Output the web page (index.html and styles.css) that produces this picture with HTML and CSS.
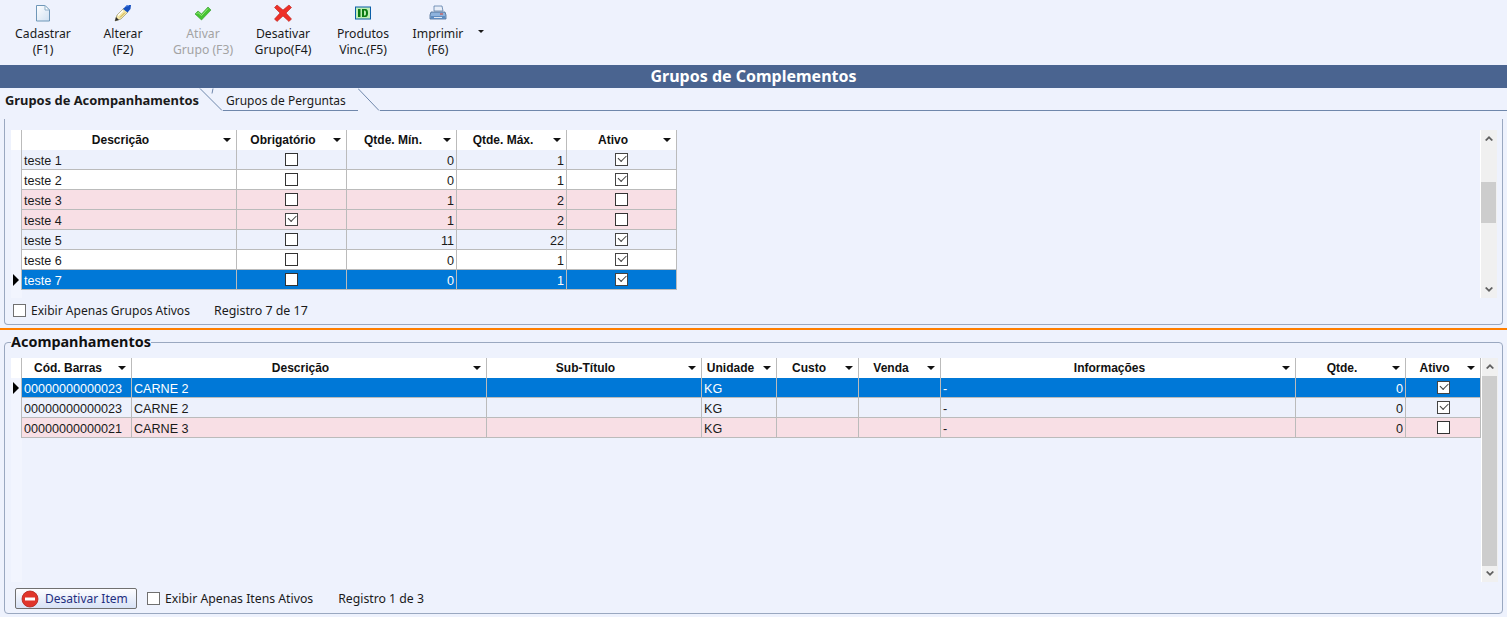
FILE: index.html
```html
<!DOCTYPE html>
<html>
  <head>
    <title>Grupos de Complementos</title>
    <meta charset="utf-8" />
    <link rel="stylesheet" href="styles.css">
  </head>
  <body>
    <div class="toolbar">
      <div class="tool">
        <svg class="tool_icon" width="18" height="18" viewBox="0 0 18 18">
          <defs>
            <linearGradient id="page_fill" x1="0" y1="0" x2="1" y2="1">
              <stop offset="0" stop-color="#ffffff"/>
              <stop offset="1" stop-color="#cfe0f2"/>
            </linearGradient>
          </defs>
          <path d="M2.500 1.500h8.500l4.500 4.500v11h-13z" fill="url(#page_fill)" stroke="#6f97b8"/>
          <path d="M11 1.500v4.500h4.500z" fill="#fff" stroke="#8fb0ca"/>
        </svg>
        <span>Cadastrar<br>(F1)</span>
      </div>
      <div class="tool">
        <svg class="tool_icon" width="18" height="18" viewBox="0 0 18 18">
          <path d="M1 17l2-6 7-7 4 4-7 7z" fill="#f4e7a8" stroke="#8a8460" stroke-width=".6"/>
          <path d="M1 17l1-4 3 3z" fill="#2c2c2c"/>
          <path d="M9 5l4-4 4 0-.500 4-3 3.500z" fill="#1650c0"/>
          <path d="M12 2l3-.500" stroke="#6f9df0" stroke-width="1"/>
          <path d="M4 11.500l5-5" stroke="#fff" stroke-width="1.200"/>
          <path d="M6 13.500l5-5" stroke="#c7a83c" stroke-width="1"/>
        </svg>
        <span>Alterar<br>(F2)</span>
      </div>
      <div class="tool tool_disabled">
        <svg class="tool_icon" width="18" height="18" viewBox="0 0 18 18">
          <path d="M1 10l3-3 3.500 3L14 3l3 3-9.500 10z" fill="#46c432" stroke="#2f9a28" stroke-width=".6"/>
          <path d="M2.500 10l1.500-1.500 3.500 3L14 4.500" fill="none" stroke="#9bec82" stroke-width="1"/>
        </svg>
        <span>Ativar<br>Grupo (F3)</span>
      </div>
      <div class="tool">
        <svg class="tool_icon" width="18" height="18" viewBox="0 0 18 18">
          <path d="M3 1l6 5L15 1l2.500 2.500L12 9l5.500 6-2.500 2.500L9 12l-6 5.500L.500 15 6 9 .500 3.500z" fill="#ee3028" stroke="#b8241c" stroke-width=".6"/>
        </svg>
        <span>Desativar<br>Grupo(F4)</span>
      </div>
      <div class="tool">
        <svg class="tool_icon" width="18" height="18" viewBox="0 0 18 18">
          <rect x="1.500" y="3" width="15" height="12" fill="#bfeeb5" stroke="#0b5fa8"/>
          <path d="M4 5h2.500v8H4zM8 5h3.500q2.500 0 2.500 4t-2.500 4H8zM10 6.500v5h1q1 0 1-2.500t-1-2.500z" fill="#0a7a12"/>
        </svg>
        <span>Produtos<br>Vinc.(F5)</span>
      </div>
      <div class="tool tool_last">
        <svg class="tool_icon" width="18" height="18" viewBox="0 0 18 18">
          <path d="M5 2h8l1 5H5z" fill="#e8eef8" stroke="#5b7ea8" stroke-width=".8"/>
          <path d="M2 8h14l1 3v4H1v-4z" fill="#8eb3dd" stroke="#44688f" stroke-width=".8"/>
          <path d="M2 12h14v3H2z" fill="#5f8cc0"/>
          <path d="M11 10h3" stroke="#e0402c"/>
          <path d="M5 13h8v1H5z" fill="#dfe7f2"/>
        </svg>
        <span>Imprimir<br>(F6)</span>
      </div>
      <div class="tool_arrow"></div>
    </div>

    <div class="title_bar">Grupos de Complementos</div>

    <div class="tabs">
      <div class="tab tab_active">Grupos de Acompanhamentos</div>
      <svg class="tab_slant" width="24" height="23" viewBox="0 0 24 23">
        <path d="M1 0.500L23 22.500" stroke="#6f87ab" fill="none"/>
        <path d="M14 0.500l-1 5" stroke="#6f87ab" fill="none"/>
      </svg>
      <div class="tab tab_other">Grupos de Perguntas</div>
      <svg class="tab_slant tab_slant_end" width="22" height="23" viewBox="0 0 22 23">
        <path d="M0 0.500L21 22.500" stroke="#6f87ab" fill="none"/>
      </svg>
      <div class="tab_fill"></div>
    </div>

    <div class="panel panel_groups">
      <div class="grid_row_wrap">
        <div class="grid_area grid_area_groups">
          <table class="grid grid_groups">
            <colgroup>
              <col class="col_ind"><col style="width:215px"><col style="width:110px"><col style="width:110px"><col style="width:110px"><col style="width:110px">
            </colgroup>
            <thead>
              <tr>
                <th class="ind"></th>
                <th><span>Descrição</span></th>
                <th><span>Obrigatório</span></th>
                <th><span>Qtde. Mín.</span></th>
                <th><span>Qtde. Máx.</span></th>
                <th><span>Ativo</span></th>
              </tr>
            </thead>
            <tbody>
              <tr class="row_blue"><td class="ind"></td><td>teste 1</td><td class="chk"><i class="box"></i></td><td class="num">0</td><td class="num">1</td><td class="chk"><i class="box on"></i></td></tr>
              <tr class="row_white"><td class="ind"></td><td>teste 2</td><td class="chk"><i class="box"></i></td><td class="num">0</td><td class="num">1</td><td class="chk"><i class="box on"></i></td></tr>
              <tr class="row_pink"><td class="ind"></td><td>teste 3</td><td class="chk"><i class="box"></i></td><td class="num">1</td><td class="num">2</td><td class="chk"><i class="box"></i></td></tr>
              <tr class="row_pink"><td class="ind"></td><td>teste 4</td><td class="chk"><i class="box on"></i></td><td class="num">1</td><td class="num">2</td><td class="chk"><i class="box"></i></td></tr>
              <tr class="row_blue"><td class="ind"></td><td>teste 5</td><td class="chk"><i class="box"></i></td><td class="num">11</td><td class="num">22</td><td class="chk"><i class="box on"></i></td></tr>
              <tr class="row_white"><td class="ind"></td><td>teste 6</td><td class="chk"><i class="box"></i></td><td class="num">0</td><td class="num">1</td><td class="chk"><i class="box on"></i></td></tr>
              <tr class="row_sel"><td class="ind"><b class="pointer"></b></td><td>teste 7</td><td class="chk"><i class="box"></i></td><td class="num">0</td><td class="num">1</td><td class="chk"><i class="box on"></i></td></tr>
            </tbody>
          </table>
        </div>
        <div class="scroll scroll_groups">
          <svg class="scroll_btn" width="16" height="16" viewBox="0 0 16 16"><path d="M4 9l4-4 4 4-1.500 1L8 7.500 5.500 10z" fill="#606060"/></svg>
          <div class="scroll_track"><div class="thumb thumb_groups"></div></div>
          <svg class="scroll_btn" width="16" height="16" viewBox="0 0 16 16"><path d="M4 7l4 4 4-4-1.500-1L8 8.500 5.500 6z" fill="#606060"/></svg>
        </div>
      </div>
      <div class="panel_foot foot_groups">
        <i class="box box_plain"></i>
        <span>Exibir Apenas Grupos Ativos</span>
        <span class="reg_groups">Registro 7 de 17</span>
      </div>
    </div>

    <div class="splitter"></div>

    <fieldset class="panel panel_items">
      <legend>Acompanhamentos</legend>
      <div class="grid_row_wrap">
        <div class="grid_area grid_area_items">
          <table class="grid grid_items">
            <colgroup>
              <col class="col_ind"><col style="width:110px"><col style="width:355px"><col style="width:215px"><col style="width:75px"><col style="width:82px"><col style="width:82px"><col style="width:355px"><col style="width:110px"><col style="width:75px">
            </colgroup>
            <thead>
              <tr>
                <th class="ind"></th>
                <th><span>Cód. Barras</span></th>
                <th><span>Descrição</span></th>
                <th><span>Sub-Título</span></th>
                <th><span>Unidade</span></th>
                <th><span>Custo</span></th>
                <th><span>Venda</span></th>
                <th><span>Informações</span></th>
                <th><span>Qtde.</span></th>
                <th><span>Ativo</span></th>
              </tr>
            </thead>
            <tbody>
              <tr class="row_sel"><td class="ind"><b class="pointer"></b></td><td>00000000000023</td><td>CARNE 2</td><td></td><td>KG</td><td></td><td></td><td>-</td><td class="num">0</td><td class="chk"><i class="box on"></i></td></tr>
              <tr class="row_blue"><td class="ind"></td><td>00000000000023</td><td>CARNE 2</td><td></td><td>KG</td><td></td><td></td><td>-</td><td class="num">0</td><td class="chk"><i class="box on"></i></td></tr>
              <tr class="row_pink"><td class="ind"></td><td>00000000000021</td><td>CARNE 3</td><td></td><td>KG</td><td></td><td></td><td>-</td><td class="num">0</td><td class="chk"><i class="box"></i></td></tr>
            </tbody>
          </table>
        </div>
        <div class="scroll scroll_items">
          <svg class="scroll_btn" width="16" height="16" viewBox="0 0 16 16"><path d="M4 9l4-4 4 4-1.500 1L8 7.500 5.500 10z" fill="#606060"/></svg>
          <div class="scroll_track"><div class="thumb thumb_items"></div></div>
          <svg class="scroll_btn" width="16" height="16" viewBox="0 0 16 16"><path d="M4 7l4 4 4-4-1.500-1L8 8.500 5.500 6z" fill="#606060"/></svg>
        </div>
      </div>
      <div class="panel_foot foot_items">
        <button class="btn_off">
          <svg width="18" height="18" viewBox="0 0 18 18">
            <circle cx="9" cy="9" r="8" fill="#e0352b" stroke="#b3251c" stroke-width=".8"/>
            <path d="M4 7.500h10v3H4z" fill="#fff"/>
          </svg>
          Desativar Item
        </button>
        <i class="box box_plain"></i>
        <span>Exibir Apenas Itens Ativos</span>
        <span class="reg_items">Registro 1 de 3</span>
      </div>
    </fieldset>
  </body>
</html>
```

FILE: styles.css
```css
html,
body {
  margin: 0;
  padding: 0;
  height: 617px;
  overflow: hidden;
}
body {
  background-color: #eef2fd;
  font-family: "Noto Sans", sans-serif;
  font-size: 12px;
  color: #1a1a1a;
}

/* toolbar */
.toolbar {
  height: 65px;
  display: flex;
  padding-left: 3px;
  box-sizing: border-box;
}
.tool {
  width: 80px;
  padding-top: 4px;
  display: flex;
  flex-direction: column;
  align-items: center;
  text-align: center;
  font-size: 12.2px;
  line-height: 16px;
}
.tool_last {
  width: 70px;
}
.tool_icon {
  display: block;
  margin-bottom: 4px;
}
.tool_disabled {
  color: #a3a3a3;
}
.tool_arrow {
  width: 0;
  height: 0;
  margin: 30px 0 0 5px;
  border: 3px solid transparent;
  border-top: 3px solid #1a1a1a;
  border-bottom: 0;
}

.title_bar {
  height: 23px;
  background-color: #4a6490;
  color: #fff;
  font-size: 16px;
  font-weight: bold;
  line-height: 23px;
  text-align: center;
}

/* tabs */
.tabs {
  height: 23px;
  display: flex;
}
.tab {
  line-height: 25px;
  white-space: nowrap;
}
.tab_active {
  width: 199px;
  padding-left: 5px;
  box-sizing: border-box;
  font-size: 12.9px;
  font-weight: bold;
}
.tab_other {
  width: 135px;
  padding-left: 3px;
  box-sizing: border-box;
  border-bottom: 1px solid #6f87ab;
  height: 23px;
}
.tab_slant {
  flex: none;
  display: block;
}
.tab_fill {
  flex: 1;
  border-bottom: 1px solid #6f87ab;
}

/* panels */
.panel {
  margin: 0 4px;
  border: 1px solid #9aa8c0;
  border-radius: 4px;
  box-sizing: border-box;
}
.panel_groups {
  height: 206px;
  margin-top: 8px;
  border-top: 0;
  border-top-left-radius: 0;
  border-top-right-radius: 0;
  padding: 11px 5px 0 6px;
}
.splitter {
  height: 2px;
  margin-top: 3px;
  background-color: #ff7f00;
}
.panel_items {
  height: 280px;
  margin-top: 4px;
  padding: 0 5px 0 6px;
  min-width: 0;
}
.panel_items legend {
  padding: 0;
  margin-left: 0;
  font-size: 14.4px;
  font-weight: bold;
  line-height: 16px;
  color: #111;
}

.grid_row_wrap {
  display: flex;
}
.grid_area {
  flex: 1;
  background: linear-gradient(#f2f5fe, #f2f5fe) no-repeat left top / 11px 100%;
}
.grid_area_groups {
  height: 168px;
}
.grid_area_items {
  height: 224px;
  margin-top: 8px;
}

/* grids */
.grid {
  border-collapse: separate;
  border-spacing: 0;
  table-layout: fixed;
  font-family: "Liberation Sans", sans-serif;
  font-size: 12.6px;
}
.grid_groups {
  width: 666px;
}
.grid_items {
  width: 1469px;
}
.col_ind {
  width: 11px;
}
.grid th {
  height: 20px;
  padding: 0;
  background-color: #fff;
  border-right: 1px solid #bbb;
  box-sizing: border-box;
  font-size: 12px;
  color: #111;
  position: relative;
  padding-right: 17px;
}
.grid th::after {
  content: "";
  position: absolute;
  right: 5px;
  top: 8px;
  border: 4px solid transparent;
  border-top: 4px solid #111;
  border-bottom: 0;
}
.grid th.ind::after {
  display: none;
}
.grid th.ind {
  padding: 0;
}
.grid td {
  height: 20px;
  padding: 2px 2px 0 2px;
  box-sizing: border-box;
  border-right: 1px solid #bbb;
  border-bottom: 1px solid #bbb;
  white-space: nowrap;
  overflow: hidden;
}
.grid td.ind {
  padding: 0;
  background-color: #f2f5fe;
  border-bottom: 0;
  position: relative;
}
.grid .num {
  text-align: right;
}
.grid .chk {
  text-align: center;
  padding: 0;
}
.row_blue td {
  background-color: #edf1fc;
}
.row_white td {
  background-color: #fff;
}
.row_pink td {
  background-color: #f8dfe5;
}
.row_sel td {
  background-color: #0078d7;
  color: #fff;
}
.pointer {
  position: absolute;
  right: 2px;
  top: 4px;
  border: 6px solid transparent;
  border-left: 6px solid #000;
  border-right: 0;
}

/* check boxes */
.box {
  display: inline-block;
  width: 13px;
  height: 13px;
  box-sizing: border-box;
  background-color: #fff;
  border: 1px solid #333;
  vertical-align: -2px;
  position: relative;
}
.box.on {
  border-color: #444;
}
.box.on::after {
  content: "";
  position: absolute;
  left: 2px;
  top: 1px;
  width: 7px;
  height: 3.500px;
  border-left: 1px solid #444;
  border-bottom: 1px solid #444;
  transform: rotate(-45deg);
}
.box_plain {
  border-color: #707070;
  vertical-align: middle;
}

/* scroll bars */
.scroll {
  width: 17px;
  flex: none;
  background-color: #f0f0f0;
  border-left: 1px solid #fff;
  box-sizing: border-box;
  display: flex;
  flex-direction: column;
}
.scroll_groups {
  height: 168px;
}
.scroll_items {
  height: 224px;
  margin-top: 8px;
}
.scroll_btn {
  display: block;
  flex: none;
  height: 18px;
  width: 16px;
}
.scroll_track {
  flex: 1;
  position: relative;
}
.thumb {
  position: absolute;
  left: 0;
  width: 15px;
  background-color: #cdcdcd;
}
.thumb_groups {
  top: 34px;
  height: 41px;
}
.thumb_items {
  top: 0;
  height: 190px;
}

/* panel footers */
.panel_foot {
  display: flex;
  align-items: center;
  font-size: 12.25px;
}
.foot_groups {
  padding: 4px 0 0 2px;
  font-size: 12.05px;
}
.foot_groups .box {
  margin-right: 5px;
}
.reg_groups {
  margin-left: 24px;
  font-size: 12.4px;
}
.foot_items {
  padding: 6px 0 0 4px;
}
.btn_off {
  width: 122px;
  height: 21px;
  padding: 0 0 0 5px;
  display: flex;
  align-items: center;
  gap: 6px;
  border: 1px solid #707070;
  border-radius: 2px;
  background-image: linear-gradient(to bottom, #fdfdff, #d8e2f6);
  font-family: "Noto Sans", sans-serif;
  font-size: 12px;
  color: #1f2f80;
  margin-right: 10px;
}
.foot_items .box {
  margin-right: 5px;
}
.reg_items {
  margin-left: 25px;
}
```
